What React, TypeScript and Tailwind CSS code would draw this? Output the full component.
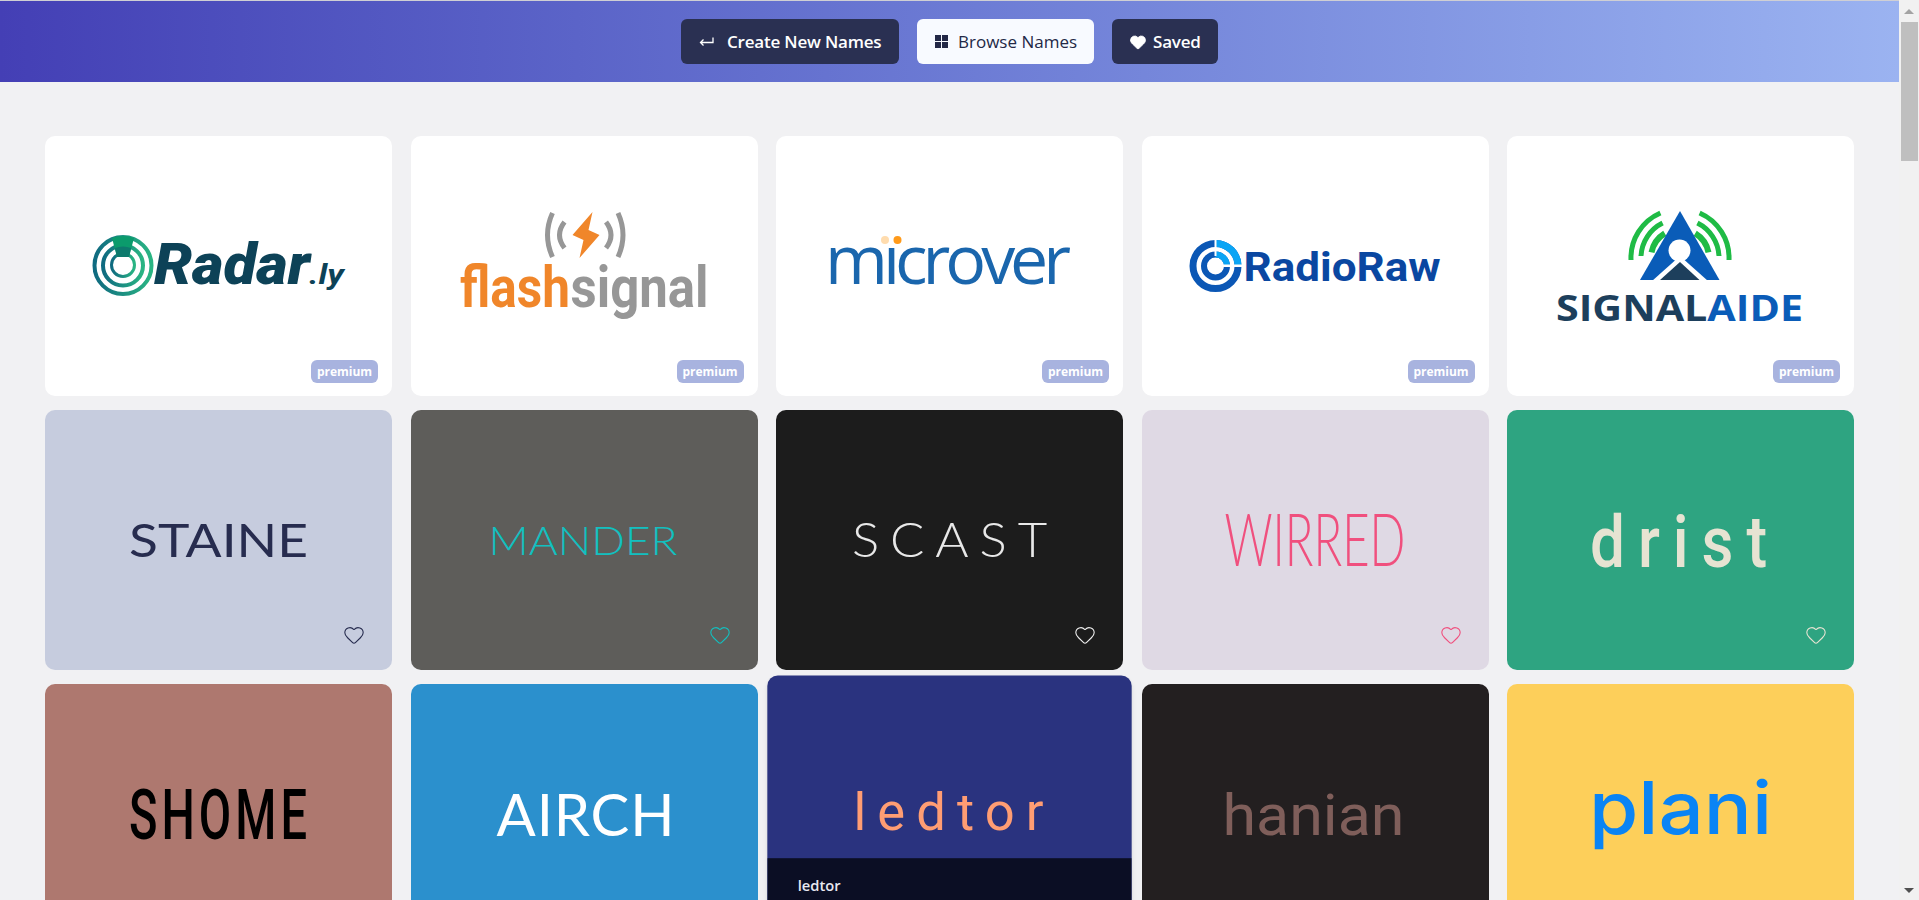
import { Heart } from "lucide-react";
import type { ReactNode } from "react";

type WordProps = {
  x: number;
  y: number;
  w: number;
  size: number;
  fill: string;
  font?: string;
  weight?: number;
  italic?: boolean;
  squeeze?: boolean;
  track?: number;
  narrow?: number;
  children: ReactNode;
};

// logo wordmark, fitted to the width it has in the picture
const Word = ({ x, y, w, size, fill, font = "Lato", weight = 400, italic, squeeze, track, narrow = 1, children }: WordProps) => (
  <text
    transform={`translate(${x} ${y}) scale(${narrow} 1)`}
    textLength={w / narrow}
    lengthAdjust={squeeze ? "spacingAndGlyphs" : "spacing"}
    letterSpacing={track}
    fontFamily={font}
    fontSize={size}
    fontWeight={weight}
    fontStyle={italic ? "italic" : "normal"}
    fill={fill}
  >
    {children}
  </text>
);

const RadarLogo = () => (
  <>
    <defs>
      <linearGradient id="radar" x1="0" x2="1" y1="0" y2="0">
        <stop offset="0" stopColor="#0f6a80" />
        <stop offset="1" stopColor="#2ab583" />
      </linearGradient>
    </defs>
    <g fill="none" stroke="url(#radar)">
      <circle cx="123" cy="265.5" r="28.5" strokeWidth="4" />
      <circle cx="123" cy="265.5" r="20" strokeWidth="4" />
      <circle cx="123" cy="265" r="11.5" strokeWidth="3" />
    </g>
    <path d="M112 238 Q123 234 134 238 L129 257 L117 257 Z" fill="#0b9b6c" />
    <path d="M115 248 Q123 245 131 248 L129 257 L117 257 Z" fill="#0d7a6d" />
    <Word x={154} y={284} w={156} size={58} fill="#0d4257" font="Roboto" weight={900} italic squeeze>
      Radar
    </Word>
    <Word x={309} y={284} w={35} size={27} fill="#0d4257" font="Roboto" weight={700} italic squeeze>
      .ly
    </Word>
  </>
);

const FlashLogo = () => (
  <>
    <g fill="none" stroke="#979797" strokeWidth="5">
      <path d="M552 213 Q542 235 552 257" />
      <path d="M564 222 Q554 235 564 248" />
      <path d="M617.5 213 Q627.5 235 617.5 257" />
      <path d="M605.5 222 Q615.5 235 605.5 248" />
    </g>
    <polygon points="592,212 572,235 583,240 579,258 599,235 588,230" fill="#f0862a" />
    <Word x={459.5} y={306.5} w={110} size={58} fill="#f0862a" font="Roboto" weight={700} narrow={0.8} squeeze>
      flash
    </Word>
    <Word x={570} y={306.5} w={138} size={58} fill="#979797" font="Roboto" weight={700} narrow={0.8} squeeze>
      signal
    </Word>
  </>
);

const MicroverLogo = () => (
  <>
    <Word x={825} y={284} w={246} size={68} fill="#1a66ad" font="Open Sans">
      microver
    </Word>
    <circle cx="893" cy="238" r="7" fill="#ffffff" />
    <circle cx="885" cy="240" r="4" fill="#ffdcae" />
    <circle cx="897.5" cy="240" r="4" fill="#ff9a1a" />
  </>
);

const RadioRawLogo = () => (
  <>
    <g fill="none" strokeWidth="7">
      <circle cx="1215" cy="266" r="22.5" stroke="#0b57b5" />
      <path d="M1215 243.5 A22.5 22.5 0 0 1 1237.5 266" stroke="#0aa5f5" />
    </g>
    <g fill="none" strokeWidth="6">
      <circle cx="1215" cy="266" r="11.5" stroke="#0b57b5" />
      <path d="M1215 254.5 A11.5 11.5 0 0 1 1226.5 266" stroke="#0aa5f5" />
    </g>
    <rect x="1214" y="238" width="2" height="18" fill="#ffffff" />
    <rect x="1215" y="264.5" width="30" height="2.5" fill="#ffffff" />
    <Word x={1243} y={281} w={197} size={40} fill="#0a47a1" font="Roboto" weight={700} squeeze>
      RadioRaw
    </Word>
  </>
);

const SignalArcs = () => (
  <g fill="none" stroke="#1fbb45">
    <path d="M1631 260 A49 49 0 0 1 1660.4 213" strokeWidth="5" />
    <path d="M1641 256 A39 39 0 0 1 1662.6 223" strokeWidth="5" />
    <path d="M1651.5 252.3 A29 29 0 0 1 1664.8 233.4" strokeWidth="6" />
  </g>
);

const SignalLogo = () => (
  <>
    <SignalArcs />
    <g transform="translate(3360 0) scale(-1 1)">
      <SignalArcs />
    </g>
    <polygon points="1680,211 1640,280 1719.5,280" fill="#0a5cb8" />
    <circle cx="1679.5" cy="250.5" r="11" fill="#ffffff" />
    <polygon points="1680,256 1652,281 1708,281" fill="#ffffff" />
    <polygon points="1680,262 1660,280 1699.5,280" fill="#1d3f5c" />
    <Word x={1556} y={321} w={247} size={36} fill="#0a5cb8" font="Open Sans" weight={700} squeeze>
      <tspan fill="#1d3f5c">SIGNAL</tspan>AIDE
    </Word>
  </>
);

type Card = {
  bg: string;
  heart?: string;
  logo: ReactNode;
};

const cards: Card[] = [
  { bg: "bg-white", logo: <RadarLogo /> },
  { bg: "bg-white", logo: <FlashLogo /> },
  { bg: "bg-white", logo: <MicroverLogo /> },
  { bg: "bg-white", logo: <RadioRawLogo /> },
  { bg: "bg-white", logo: <SignalLogo /> },
  {
    bg: "bg-[#c6ccde]",
    heart: "text-[#272c4f]",
    logo: (
      <Word x={129} y={557} w={179} size={46} fill="#272c4f" font="Lato" squeeze>
        STAINE
      </Word>
    ),
  },
  {
    bg: "bg-[#5e5d5a]",
    heart: "text-[#12c0c0]",
    logo: (
      <Word x={488} y={555} w={189} size={40} fill="#12c0c0" font="Lato" weight={300} squeeze>
        MANDER
      </Word>
    ),
  },
  {
    bg: "bg-[#1c1c1c]",
    heart: "text-[#eeeeee]",
    logo: (
      <Word x={852} y={557} w={206} size={47} fill="#e8e8e8" font="Lato" weight={300} track={10} narrow={0.85} squeeze>
        SCAST
      </Word>
    ),
  },
  {
    bg: "bg-[#dfd9e4]",
    heart: "text-[#f0507e]",
    logo: (
      <Word x={1224} y={566} w={181} size={72} fill="#f0507e" font="Lato" weight={300} narrow={0.6} squeeze>
        WIRRED
      </Word>
    ),
  },
  {
    bg: "bg-[#2ea481]",
    heart: "text-[#e6e3d2]",
    logo: (
      <Word x={1590} y={566.5} w={190} size={72} fill="#e6e3d2" font="Roboto" weight={500} track={15} narrow={0.85} squeeze>
        drist
      </Word>
    ),
  },
  {
    bg: "bg-[#ae786f]",
    logo: (
      <Word x={129} y={839} w={182} size={70} fill="#000000" font="Roboto" weight={500} track={6} narrow={0.7} squeeze>
        SHOME
      </Word>
    ),
  },
  {
    bg: "bg-[#2b90cd]",
    logo: (
      <Word x={496} y={836} w={178} size={58} fill="#ffffff" font="Lato">
        AIRCH
      </Word>
    ),
  },
  {
    bg: "bg-[#2a337f]",
    logo: (
      <Word x={858} y={831} w={181} size={50} fill="#ff9d73" font="Roboto">
        ledtor
      </Word>
    ),
  },
  {
    bg: "bg-[#231f20]",
    logo: (
      <Word x={1222} y={835} w={182} size={58} fill="#7f5e5a" font="Roboto" squeeze>
        hanian
      </Word>
    ),
  },
  {
    bg: "bg-[#fdcf5a]",
    logo: (
      <Word x={1589} y={834} w={183} size={73} fill="#0a84f5" font="Inter" weight={500} squeeze>
        plani
      </Word>
    ),
  },
];

const colX = [45, 410.5, 776, 1141.5, 1507];
const rowY = [136, 410, 684];

const LogoCard = ({ card, index }: { card: Card; index: number }) => {
  const box = `${colX[index % 5]} ${rowY[Math.floor(index / 5)]} 347 260`;
  const hovered = index === 12;

  return (
    <div
      className={`relative overflow-hidden rounded-[10px] ${card.bg} ${
        hovered ? "z-10 scale-105 -translate-y-[2px] shadow-md" : ""
      }`}
    >
      <svg viewBox={box} className="h-full w-full">
        {card.logo}
      </svg>
      {index < 5 && (
        <span className="absolute right-[14px] bottom-[13px] flex h-[23px] w-[67px] items-center justify-center rounded-md bg-[#a8b3df] text-xs font-bold text-white">
          premium
        </span>
      )}
      {card.heart && (
        <Heart
          size={22}
          strokeWidth={1.2}
          className={`absolute right-[27px] bottom-[24px] ${card.heart}`}
        />
      )}
      {hovered && (
        <div className="absolute inset-x-0 bottom-0 h-[86px] bg-[#0b0e24] px-[29px] pt-[16px] text-sm font-semibold text-[#e8e8f0]">
          ledtor
        </div>
      )}
    </div>
  );
};

const App = () => {
  return (
    <div className="flex h-screen overflow-hidden bg-[#f1f1f3] font-['Open_Sans',sans-serif]">
      <div className="min-w-0 flex-1">
        <div className="h-px bg-[#cfcfd4]" />
        <header className="flex h-[81px] items-center justify-center gap-[18px] bg-gradient-to-r from-[#443fb5] to-[#9bb3f1]">
          <button className="flex h-[45px] w-[218px] items-center gap-[13px] rounded-md bg-[#2a3052] pl-[18px] text-[17px] font-semibold tracking-[-0.2px] text-white">
            <svg viewBox="0 0 15 10" className="h-[10px] w-[15px]" fill="none" stroke="currentColor" strokeWidth="1.3">
              <path d="M14 0.5 V5.5 H1.5 M4.5 2.5 L1.5 5.5 L4.5 8.5" />
            </svg>
            Create New Names
          </button>
          <button className="flex h-[45px] w-[177px] items-center gap-[10px] rounded-md bg-[#f8faff] pl-[18px] text-[17px] text-[#232846]">
            <svg viewBox="0 0 13 13" className="h-[13px] w-[13px]" fill="currentColor">
              <rect width="6" height="6" />
              <rect x="7" width="6" height="6" />
              <rect y="7" width="6" height="6" />
              <rect x="7" y="7" width="6" height="6" />
            </svg>
            Browse Names
          </button>
          <button className="flex h-[45px] w-[106px] items-center gap-[6px] rounded-md bg-[#2a3052] pl-[17px] text-[17px] font-semibold tracking-[-0.2px] text-white">
            <Heart size={18} fill="currentColor" strokeWidth={1} />
            Saved
          </button>
        </header>
        <main className="grid auto-rows-[260px] grid-cols-5 gap-x-[18.5px] gap-y-[14px] px-[45px] pt-[54px]">
          {cards.map((card, i) => (
            <LogoCard key={i} card={card} index={i} />
          ))}
        </main>
      </div>

      {/* scrollbar */}
      <div className="flex w-[20px] shrink-0 flex-col items-center bg-[#f1f1f1]">
        <div className="mt-[9px] h-0 w-0 border-x-[5px] border-b-[5px] border-x-transparent border-b-[#a3a3a3]" />
        <div className="mt-[8px] ml-[1px] h-[139px] w-[17px] bg-[#bfbfbf]" />
        <div className="mt-auto mb-[7px] h-0 w-0 border-x-[5px] border-t-[5px] border-x-transparent border-t-[#505050]" />
      </div>
    </div>
  );
};

export default App;
